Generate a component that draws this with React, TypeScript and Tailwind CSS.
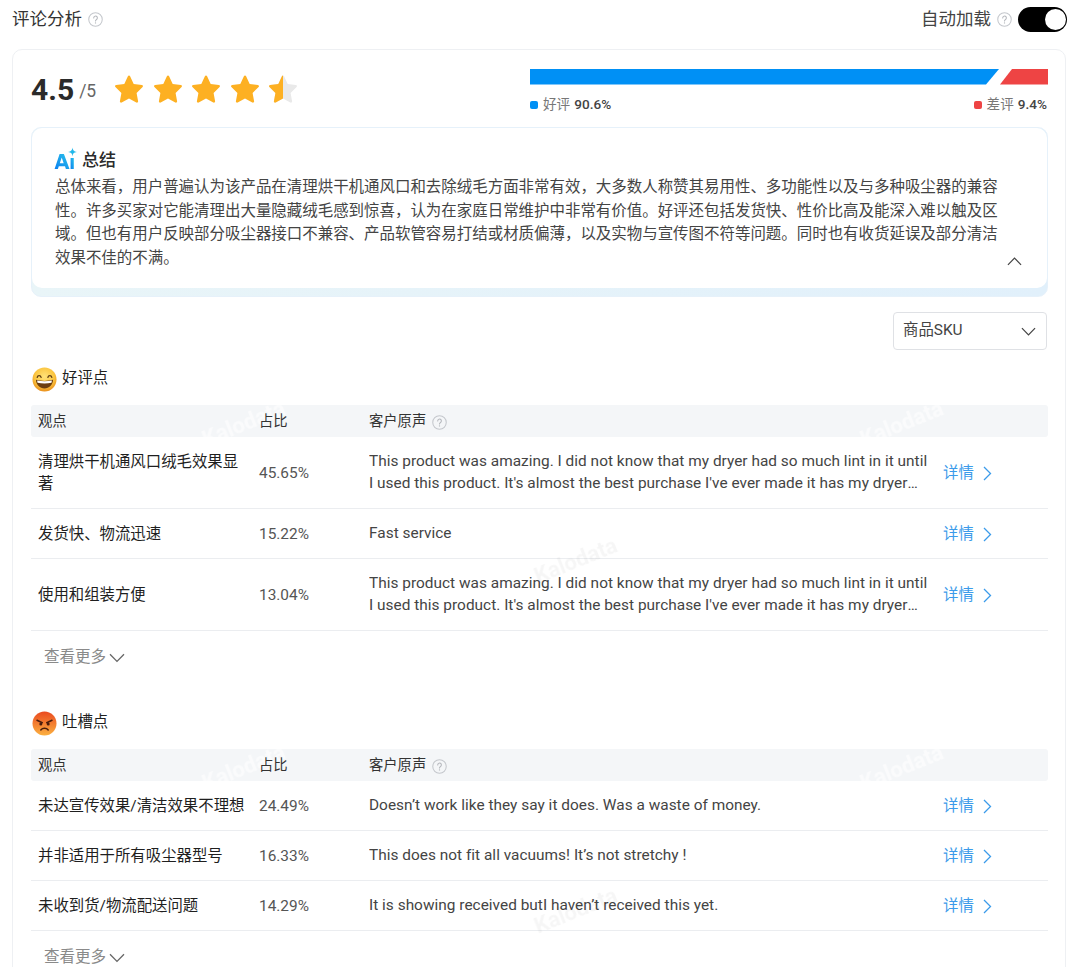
import React from "react";

const font = { fontFamily: '"Roboto","Noto Sans CJK SC",sans-serif' };

function Help({ size = 15 }: { size?: number }) {
  return (
    <svg width={size} height={size} viewBox="0 0 16 16" fill="none" className="shrink-0">
      <circle cx="8" cy="8" r="7.2" stroke="#c4c7cc" strokeWidth="1.1" />
      <path d="M6.1 6.3a1.95 1.95 0 1 1 3 1.65c-.7.45-1.1.85-1.1 1.6" stroke="#b4b7bc" strokeWidth="1.1" fill="none" strokeLinecap="round" />
      <circle cx="8" cy="11.6" r=".7" fill="#b4b7bc" />
    </svg>
  );
}

function Chevron({ dir = "down", w = 16, color = "#555" }: { dir?: "down" | "up"; w?: number; color?: string }) {
  return (
    <svg width={w} height={w * 0.6} viewBox="0 0 16 9.6" fill="none" className="shrink-0">
      <path d={dir === "down" ? "M1 1.2 8 8.4 15 1.2" : "M1 8.4 8 1.2 15 8.4"} stroke={color} strokeWidth="1.3" />
    </svg>
  );
}

const STAR = "M15 1.6c.5 0 .9.3 1.1.7l3.6 7.6 8.2 1.1c1 .1 1.4 1.4.7 2.1l-6 5.8 1.5 8.3c.2 1-.9 1.8-1.8 1.3L15 24.6l-7.3 3.9c-.9.5-2-.3-1.8-1.3l1.5-8.3-6-5.8c-.7-.7-.3-2 .7-2.1l8.2-1.1 3.6-7.6c.2-.4.6-.7 1.1-.7z";

function Star({ half }: { half?: boolean }) {
  return (
    <svg width="30" height="30" viewBox="0 0 30 30" className="shrink-0">
      {half ? (
        <>
          <path d={STAR} fill="#e9e9e9" />
          <clipPath id="halfStar"><rect x="0" y="0" width="15" height="30" /></clipPath>
          <path d={STAR} fill="#fdb022" clipPath="url(#halfStar)" />
        </>
      ) : (
        <path d={STAR} fill="#fdb022" />
      )}
    </svg>
  );
}

function AiLogo() {
  return (
    <svg width="24" height="24" viewBox="0 0 24 24" className="shrink-0 mt-[-4px]">
      <defs>
        <linearGradient id="aiG" x1="0" y1="1" x2="1" y2="0">
          <stop offset="0" stopColor="#0a7ff0" />
          <stop offset="1" stopColor="#2bc4ea" />
        </linearGradient>
      </defs>
      <path fillRule="evenodd" d="M5.600 7h4.300L15.500 22h-3.600l-.9-2.700H4.800L3.900 22H.6L5.600 7zm2.100 3.400-1.900 5.900h3.900L7.700 10.400z" fill="url(#aiG)" />
      <rect x="16.600" y="11" width="3.200" height="11" fill="url(#aiG)" />
      <path d="M18.500 .6c.4 2.900 1.300 3.900 4.400 4.400-3.100.5-4 1.500-4.400 4.400-.4-2.900-1.300-3.900-4.400-4.400 3.100-.5 4-1.500 4.400-4.400z" fill="#22b8ea" />
    </svg>
  );
}

function SmileEmoji() {
  return (
    <svg width="25" height="25" viewBox="0 0 25 25" className="shrink-0">
      <defs>
        <radialGradient id="smG" cx="50%" cy="38%" r="62%">
          <stop offset="0" stopColor="#ffe27a" />
          <stop offset="0.65" stopColor="#fbc53f" />
          <stop offset="1" stopColor="#e98f1c" />
        </radialGradient>
      </defs>
      <circle cx="12.500" cy="12.500" r="12" fill="url(#smG)" />
      <path d="M5.200 10.300c.5-2.200 3.300-2.200 3.900 0M15.900 10.300c.5-2.200 3.300-2.200 3.900 0" fill="none" stroke="#5b3a12" strokeWidth="1.300" strokeLinecap="round" />
      <path d="M3.900 12.800c5.400 1.500 11.800 1.500 17.200 0-.3 5.300-4 8.700-8.600 8.700s-8.300-3.400-8.600-8.700z" fill="#6b3d10" />
      <path d="M5.100 13.500c4.800 1 10 1 14.800 0l-.4 2.300c-4.500.9-9.500.9-14 0z" fill="#fff" />
    </svg>
  );
}

function AngryEmoji() {
  return (
    <svg width="25" height="25" viewBox="0 0 25 25" className="shrink-0">
      <defs>
        <linearGradient id="anG" x1="0" y1="0" x2="0" y2="1">
          <stop offset="0" stopColor="#ea4a20" />
          <stop offset="1" stopColor="#fbb040" />
        </linearGradient>
      </defs>
      <circle cx="12.500" cy="12.500" r="12" fill="url(#anG)" />
      <path d="M5 9.200l5.300 2.500M20 9.200l-5.300 2.500" stroke="#4a1c0c" strokeWidth="1.500" strokeLinecap="round" />
      <circle cx="8.800" cy="13" r="1.500" fill="#4a1c0c" />
      <circle cx="16.200" cy="13" r="1.500" fill="#4a1c0c" />
      <path d="M8.800 19c1.800-2.300 5.600-2.300 7.400 0" fill="none" stroke="#4a1c0c" strokeWidth="1.500" strokeLinecap="round" />
    </svg>
  );
}

type Row = { a: string; p: string; t: string; h: string };

const LONG = "This product was amazing. I did not know that my dryer had so much lint in it until I used this product. It's almost the best purchase I've ever made it has my dryer running like new again and I could not be happier with it.";

const good: Row[] = [
  { a: "清理烘干机通风口绒毛效果显著", p: "45.65%", t: LONG, h: "h-[72px]" },
  { a: "发货快、物流迅速", p: "15.22%", t: "Fast service", h: "h-[50px]" },
  { a: "使用和组装方便", p: "13.04%", t: LONG, h: "h-[72px]" },
];
const bad: Row[] = [
  { a: "未达宣传效果/清洁效果不理想", p: "24.49%", t: "Doesn’t work like they say it does. Was a waste of money.", h: "h-[50px]" },
  { a: "并非适用于所有吸尘器型号", p: "16.33%", t: "This does not fit all vacuums! It’s not stretchy !", h: "h-[50px]" },
  { a: "未收到货/物流配送问题", p: "14.29%", t: "It is showing received butI haven’t received this yet.", h: "h-[50px]" },
];

function Section({ title, emoji, rows, markClass }: { title: string; emoji: React.ReactNode; rows: Row[]; markClass: string }) {
  return (
    <section className="relative">
      <div className="flex items-center gap-[5px] h-[28px] pl-[1px] text-[15.4px] text-[#1f1f1f]">
        {emoji}
        <span>{title}</span>
      </div>
      <div className="relative mt-[12px]">
        <div className="flex items-center h-[32px] pt-[2px] bg-[#f4f6f8] text-[14.3px] text-[#333] rounded-[3px]">
          <div className="relative z-10 w-[228px] pl-[7px]">观点</div>
          <div className="relative z-10 w-[110px]">占比</div>
          <div className="relative z-10 flex items-center gap-[6px]">客户原声 <Help size={15} /></div>
        </div>
        {rows.map((r) => (
          <div key={r.a} className={`flex items-center border-b border-[#ebedf0] ${r.h} text-[15.4px]`}>
            <div className="w-[228px] pl-[7px] pr-[12px] leading-[22px] text-[#1f1f1f] shrink-0">{r.a}</div>
            <div className="w-[110px] mt-[2px] text-[#555] shrink-0">{r.p}</div>
            <div className="w-[574px] shrink-0 pr-[9px] mb-[2px] leading-[22px] text-[#444] tracking-[0.02px] line-clamp-2">{r.t}</div>
            <div className="flex items-center gap-[9px] mt-[2px] text-[#3b9bea]">
              详情
              <svg width="9" height="15" viewBox="0 0 9 15" fill="none"><path d="M1 1 7.500 7.500 1 14" stroke="#3b9bea" strokeWidth="1.300" /></svg>
            </div>
          </div>
        ))}
        <span className="absolute left-[169px] top-[2px] text-[22px] font-bold text-white/60 -rotate-[22deg] blur-[0.5px] pointer-events-none">Kalodata</span>
        <span className="absolute left-[827px] top-[2px] text-[22px] font-bold text-white/60 -rotate-[22deg] blur-[0.5px] pointer-events-none">Kalodata</span>
        <span className={`absolute left-[501px] ${markClass} text-[22px] font-bold text-black/[0.035] -rotate-[22deg] blur-[0.5px] pointer-events-none`}>Kalodata</span>
      </div>
      <div className="flex items-center gap-[3px] h-[50px] pt-[4px] pl-[13px] text-[15.5px] text-[#8a8a8a]">
        查看更多 <Chevron w={16} color="#666" />
      </div>
    </section>
  );
}

export default function App() {
  return (
    <div style={font} className="w-[1080px] h-[967px] overflow-hidden bg-white px-[12px] text-[#333]">
      <header className="flex items-center justify-between h-[38px] pt-[1px]">
        <div className="flex items-center gap-[6px] text-[17.5px] text-[#333]">
          评论分析 <Help size={15} />
        </div>
        <div className="flex items-center mr-[1px]">
          <span className="text-[17.5px] text-[#444]">自动加载</span>
          <span className="ml-[6px] mr-[6px]"><Help size={15} /></span>
          <div className="w-[49px] h-[25px] rounded-full bg-black flex items-center justify-end pr-[1.500px]">
            <div className="w-[21px] h-[21px] rounded-full bg-white" />
          </div>
        </div>
      </header>

      <main className="mt-[11px] w-[1054px] border border-[#eef0f3] rounded-[10px] pl-[18px] pr-[17px] pt-[19px] pb-[40px]">
        <div className="flex items-start justify-between h-[58px]">
          <div className="flex items-center pt-[6px]">
            <span className="text-[30px] font-bold leading-[30px] text-[#2b2b2b]">4.5</span>
            <span className="ml-[5px] mt-[3px] text-[17.5px] text-[#666]">/5</span>
            <div className="flex ml-[18px] gap-[8.500px] mt-[-2px]">
              <Star /><Star /><Star /><Star /><Star half />
            </div>
          </div>
          <div className="w-[518px]">
            <svg width="518" height="16" viewBox="0 0 518 16" className="block">
              <polygon points="0,0 469,0 456,15.500 0,15.500" fill="#0090f5" />
              <polygon points="482,0 518,0 518,15.500 470,15.500" fill="#ee4444" />
            </svg>
            <div className="flex justify-between mt-[11px] pr-[1px] text-[13.600px] leading-[17px]">
              <div className="flex items-center">
                <i className="w-[8px] h-[8px] rounded-[2px] bg-[#0090f5] mr-[5px]" />
                <span className="text-[#777]">好评</span>
                <b className="ml-[4px] font-medium text-[#444]">90.6%</b>
              </div>
              <div className="flex items-center">
                <i className="w-[8px] h-[8px] rounded-[2px] bg-[#ee4444] mr-[5px]" />
                <span className="text-[#777]">差评</span>
                <b className="ml-[4px] font-medium text-[#444]">9.4%</b>
              </div>
            </div>
          </div>
        </div>

        <div className="h-[170px] rounded-[10px] border border-[#e6f1fa] bg-gradient-to-r from-[#e9f5f8] to-[#e1f0fb]">
          <div className="relative h-[160px] rounded-[10px] bg-white pl-[22px] pr-[48px] pt-[20px]">
            <div className="flex items-center gap-[4px] h-[26px] text-[17px] font-medium text-[#2b2b2b]">
              <AiLogo /> 总结
            </div>
            <p className="mt-[2px] ml-[1px] text-[15.460px] leading-[23.500px] text-[#444]">
              总体来看，用户普遍认为该产品在清理烘干机通风口和去除绒毛方面非常有效，大多数人称赞其易用性、多功能性以及与多种吸尘器的兼容性。许多买家对它能清理出大量隐藏绒毛感到惊喜，认为在家庭日常维护中非常有价值。好评还包括发货快、性价比高及能深入难以触及区域。但也有用户反映部分吸尘器接口不兼容、产品软管容易打结或材质偏薄，以及实物与宣传图不符等问题。同时也有收货延误及部分清洁效果不佳的不满。
            </p>
            <span className="absolute right-[25px] bottom-[22px]"><Chevron dir="up" w={15} color="#444" /></span>
          </div>
        </div>

        <div className="flex justify-end mt-[15px]">
          <div className="flex items-center justify-between w-[154px] h-[38px] border border-[#dfe1e5] rounded-[4px] pl-[9px] pr-[10px] text-[15.400px] text-[#444] mr-[1px]">
            商品SKU <Chevron w={15} color="#444" />
          </div>
        </div>

        <div className="mt-[15px] flex flex-col gap-[28px]">
          <Section title="好评点" emoji={<SmileEmoji />} rows={good} markClass="top-[139px]" />
          <Section title="吐槽点" emoji={<AngryEmoji />} rows={bad} markClass="top-[145px]" />
        </div>
      </main>
    </div>
  );
}
